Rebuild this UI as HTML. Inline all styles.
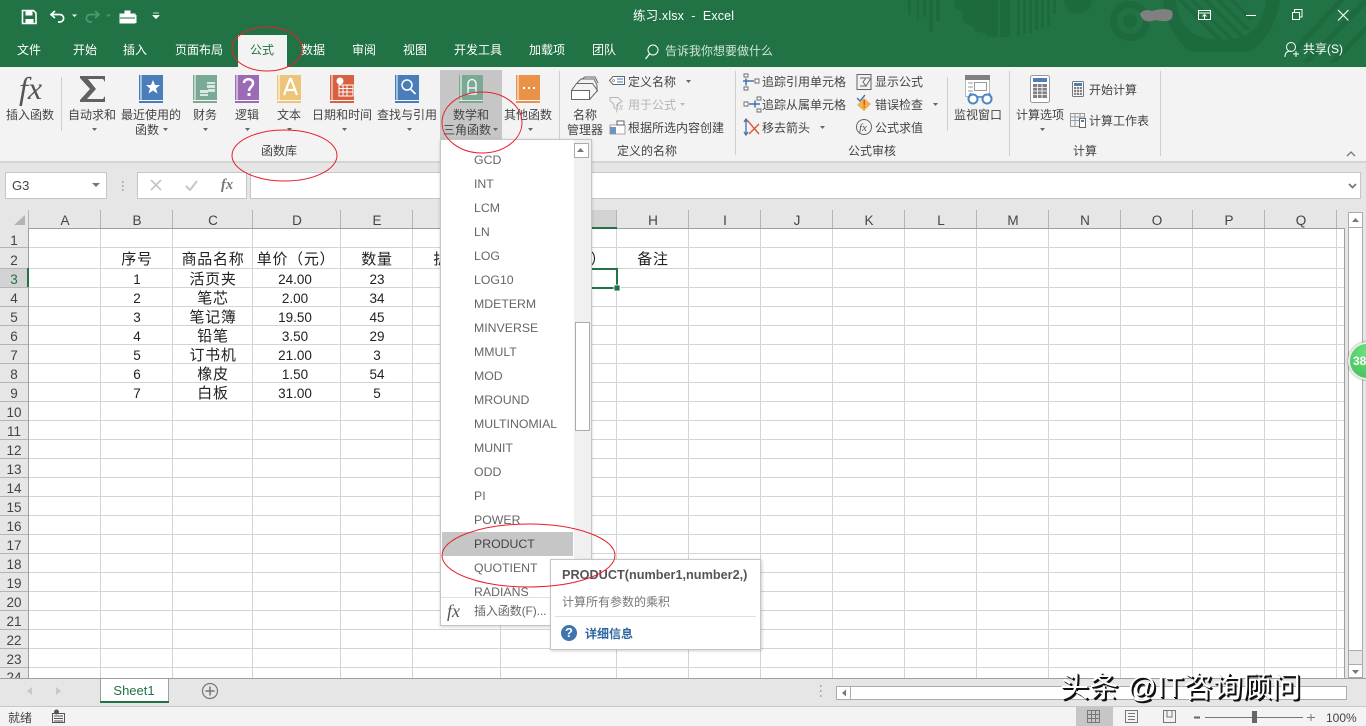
<!DOCTYPE html>
<html lang="zh"><head><meta charset="utf-8"><title>练习.xlsx - Excel</title>
<style>
html,body{margin:0;padding:0;width:1366px;height:726px;overflow:hidden;background:#fff}
body{position:relative;font-family:"Liberation Sans","Noto Sans CJK SC",sans-serif;font-size:12px;color:#444}
.a{position:absolute}
.t,.c,.r,.n,.h,.m,.rt{position:absolute;white-space:nowrap;line-height:16px;height:16px;margin-top:1px}
.c{transform:translateX(-50%)}
.w{color:#fff}
.rt{color:#444}
.n{transform:translateX(-50%);font-size:15px;letter-spacing:.7px;color:#222;line-height:20px;height:20px}
.d{transform:translateX(-50%);font-size:13.5px;color:#222;position:absolute;white-space:nowrap;line-height:20px;height:20px;margin-top:1px}
.h{transform:translateX(-50%);font-size:13.5px;color:#444;top:212px}
.r{left:0;width:28px;text-align:center;font-size:13.5px;color:#444}
.m{left:474px;font-size:12.3px;color:#666}
svg{position:absolute;left:0;top:0}
</style></head><body>

<div class="a" style="left:0;top:0;width:1366px;height:67px;background:#217346"></div>
<div class="a" style="left:0;top:67px;width:1366px;height:94px;background:#f3f3f3"></div>
<div class="a" style="left:0;top:161px;width:1366px;height:2px;background:#d4d4d4"></div>
<div class="a" style="left:0;top:163px;width:1366px;height:47px;background:#e6e6e6"></div>
<div class="a" style="left:238px;top:35px;width:49px;height:32px;background:#f3f3f3"></div>
<div class="a" style="left:440px;top:70px;width:62px;height:69px;background:#c6c6c6"></div>

<svg width="1366" height="67" viewBox="0 0 1366 67" fill="#1e6a3f">
<path d="M908 0h3v15h-3zM917 0h2v20h-2zM923 0h3v17h-3zM929 0h4v32h-4zM936 0h4v21h-4zM955 0h8v12l-8-4zM963 0h12v28l-12-6zM975 0h12v34l-12-3zM987 0h11v37h-11zM1000 0h10v37l-10 0zM1017 0h3v36h-3zM1023 0h3v34h-3zM1029 0h3v33h-3zM1035 0h3v30h-3zM1041 0h3v28h-3zM1047 0h3v26h-3zM1053 0h3v14h-3z"/>
<circle cx="1078" cy="0" r="14"/>
<path fill-rule="evenodd" d="M1130 1a20 20 0 1 0 .01 0zM1130 8a13 13 0 1 1-.01 0z"/><circle cx="1130" cy="21" r="7"/>
<path d="M1163 0h13c3 28 18 40 45 40s42-12 45-40h14c-2 18-12 40-30 52h-58c-17-10-27-32-29-52z"/>
<path d="M1178 0h5l44 44h-6zM1190 0h5l42 42h-5zM1203 0h5l38 38h-5zM1216 0h5l30 30h-5zM1229 0h5l20 20h-5z"/>
<path d="M1290 52l48-52h7l-48 52zM1303 62l60-62h3v5l-56 57zM1330 62l36-37v7l-29 30zM1270 0h8l-4 6z"/>
</svg>

<svg width="1366" height="726" viewBox="0 0 1366 726" fill="none">
<!-- QAT -->
<path d="M22.500 10.500h11l2.500 2.500v10.500h-13.500z" stroke="#fff" stroke-width="1.600"/><path d="M25.500 11h7v4.500h-7zM25.500 19h8v4.500h-8z" fill="#fff"/>
<path d="M55 11l-4 3.500 4 3.500M51.500 14.500h8c5.500 0 5.500 7.500 0 7.500h-1.500" stroke="#fff" stroke-width="1.700"/>
<path d="M72 14.500h5l-2.500 2.500z" fill="#fff"/>
<path d="M95 11l4 3.500-4 3.500M98.500 14.500h-8c-5.500 0-5.500 7.500 0 7.500h1.500" stroke="#4c9a6f" stroke-width="1.700"/>
<path d="M106 14.500h5l-2.500 2.500z" fill="#4c9a6f"/>
<path d="M120 14h15v9h-15zM125 14v-3h5v3" fill="#fff" stroke="#fff"/><path d="M120 18h15" stroke="#217346"/><rect x="135" y="15" width="1.500" height="8" fill="#fff"/>
<path d="M153 13h6M153 15.500h6l-3 3z" stroke="#fff" fill="#fff" stroke-width=".8"/>
<!-- window -->
<path d="M1198.500 10.500h12v9h-12zM1198.500 13h12M1204.500 19v-4M1202.500 16.500l2-2 2 2" stroke="#fff"/>
<rect x="1246" y="15" width="10" height="1" fill="#fff"/>
<path d="M1292.500 12.500h7v7h-7zM1294.500 12v-2.500h7.500v7.500h-2.500" stroke="#fff"/>
<path d="M1338 10l10.500 10.500M1348.500 10l-10.500 10.500" stroke="#fff" stroke-width="1.100"/>
<path d="M1140 14c3-5 8-4 12-3 6-2 15-3 20 0 1 4 1 7-2 9-5 2-10 1-15 0-5 2-12 3-15-6z" fill="#808080"/>
<!-- search / share -->
<circle cx="653" cy="50" r="5" stroke="#fff"/><path d="M649.500 54l-4 5" stroke="#fff" stroke-width="1.300"/>
<circle cx="1291" cy="47" r="4.500" stroke="#fff"/><path d="M1285 57c0-4 2-6 6-6M1293 54h6M1296 51v6" stroke="#fff"/>

<!-- ribbon separators -->
<path d="M61.500 77v54M559.500 71v84M735.500 71v84M947.500 77v54M1009.500 71v85M1160.500 71v85" stroke="#cfcfcf"/>

<!-- fx Σ -->
<path d="M80 76h25v6l-2-3h-15l8 10-9 10h16l2-3v6H80v-2l10-11-10-11z" fill="#616161"/>
<!-- books -->
<g transform="translate(139,75)"><path d="M0 0h24v25H0z" fill="#4a7eba"/><path d="M2 0v26M0 26h24" stroke="#fff"/><path d="M0 27h24" stroke="#4a7eba" stroke-width="2"/><path d="M14 5l2 5h5l-4 3.500 1.500 5-4.500-3-4.500 3 1.500-5L7 10h5z" fill="#fff"/></g>
<g transform="translate(193,75)"><path d="M0 0h24v25H0z" fill="#7aaa96"/><path d="M2 0v26M0 26h24" stroke="#fff"/><path d="M0 27h24" stroke="#7aaa96" stroke-width="2"/><path d="M7 15h8v3H7zM7 19h8v2H7zM14 10h8v3h-8zM15 14h7v3h-7zM14 7h8v2h-8z" fill="#d9e7e1"/></g>
<g transform="translate(235,75)"><path d="M0 0h24v25H0z" fill="#9c6bb5"/><path d="M2 0v26M0 26h24" stroke="#fff"/><path d="M0 27h24" stroke="#9c6bb5" stroke-width="2"/><path d="M9 8c0-5 9-5 9 0 0 4-4 4-4 8" stroke="#fff" stroke-width="2.500"/><rect x="12.500" y="18" width="3" height="3" fill="#fff"/></g>
<g transform="translate(277,75)"><path d="M0 0h24v25H0z" fill="#eec47a"/><path d="M2 0v26M0 26h24" stroke="#fff"/><path d="M0 27h24" stroke="#eec47a" stroke-width="2"/><path d="M7 20l6-16h1l6 16M9 15h9" stroke="#fff" stroke-width="2.200"/></g>
<g transform="translate(330,75)"><path d="M0 0h24v25H0z" fill="#d6603f"/><path d="M2 0v26M0 26h24" stroke="#fff"/><path d="M0 27h24" stroke="#d6603f" stroke-width="2"/><circle cx="10" cy="6" r="3.500" fill="#fff"/><path d="M9 10h14v11H9zM9 13.500h14M9 17h14M13 10v11M17 10v11" stroke="#fff"/></g>
<g transform="translate(395,75)"><path d="M0 0h24v25H0z" fill="#4a7eba"/><path d="M2 0v26M0 26h24" stroke="#fff"/><path d="M0 27h24" stroke="#4a7eba" stroke-width="2"/><circle cx="12" cy="10" r="5" stroke="#fff" stroke-width="1.500"/><path d="M15.500 14l5 5" stroke="#fff" stroke-width="1.800"/></g>
<g transform="translate(459,75)"><path d="M0 0h24v25H0z" fill="#7aaa96"/><path d="M2 0v26M0 26h24" stroke="#fff"/><path d="M0 27h24" stroke="#7aaa96" stroke-width="2"/><path d="M9 19V9c0-6 8-6 8 0v10zM9 13h8" stroke="#fff" stroke-width="1.300"/></g>
<g transform="translate(516,75)"><path d="M0 0h24v25H0z" fill="#e8924a"/><path d="M2 0v26M0 26h24" stroke="#fff"/><path d="M0 27h24" stroke="#e8924a" stroke-width="2"/><path d="M7 12h2v2H7zM12 12h2v2h-2zM17 12h2v2h-2z" fill="#fff"/></g>

<!-- carets -->
<path d="M92 128h5l-2.500 3zM163 128h5l-2.500 3zM203 128h5l-2.500 3zM245 128h5l-2.500 3zM287 128h5l-2.500 3zM342 128h5l-2.500 3zM407 128h5l-2.500 3zM493 128h5l-2.500 3zM528 128h5l-2.500 3zM686 80h5l-2.500 3zM820 126h5l-2.500 3zM933 103h5l-2.500 3zM1040 128h5l-2.500 3z" fill="#666"/>
<path d="M680 103h5l-2.500 3z" fill="#bbb"/>

<!-- names icons -->
<path d="M571.500 90.500h18v9h-18zM571.500 90.500l5-7h16l5 7-8 9M577 83l4-4h13l3 6v7M582 79l3-2h10l3 6" stroke="#666" fill="none"/><rect x="572" y="91" width="17" height="8" fill="#fff"/><path d="M571.500 90.500h18v9h-18z" stroke="#666"/>
<path d="M613 76.500h11.500v8H613l-3.500-4z" stroke="#666" fill="#fff"/><path d="M617 79h6M617 82h6" stroke="#3f74ae"/><circle cx="613.500" cy="80.500" r="1" stroke="#666" stroke-width=".6"/>
<path d="M610 97.500h8l4 4-5 3v5l-3-2v-3l-4-4z" stroke="#b5b5b5"/><text x="616" y="110" font-family="Liberation Serif" font-style="italic" font-size="10" fill="#b5b5b5">fx</text>
<path d="M610 125h15v9h-15z" fill="#fff" stroke="#888" stroke-width=".8"/><path d="M610 127h6v7h-6z" fill="#6f93bd"/><path d="M617 121h7v4h-7z" stroke="#666" fill="#fff"/>

<!-- audit icons -->
<path d="M744 74h4v3h-4zM744 87h4v3h-4zM755 79h4v4h-4z" stroke="#666" stroke-width=".9" fill="#fff"/><path d="M748 81h6M746 78.500v7M743 81h6" stroke="#3f74ae" stroke-width="1.500"/>
<path d="M744 102h4v4h-4zM757 97h4v3h-4zM757 109h4v3h-4z" stroke="#666" stroke-width=".9" fill="#fff"/><path d="M749 104h11M755 100.500v7" stroke="#3f74ae" stroke-width="1.500"/>
<path d="M746 120v14M744 132l2 3 2-3M744 122l2-3 2 3" stroke="#3f74ae" stroke-width="1.300"/><path d="M747 120l12 14M759 124l-10 10" stroke="#d9573a" stroke-width="1.400"/>
<path d="M857 74.500h14v15h-14zM860 78h6l-3 4 3 4h-6M867 78l3 0M866 86l5-8" stroke="#666"/>
<path d="M857 98l3 3 5-6" stroke="#3f74ae" stroke-width="1.400"/><path d="M864 98l7 6-7 7-7-6z" fill="#f0b04c"/><rect x="863.500" y="100" width="1.500" height="5" fill="#d1502f"/><rect x="863.500" y="106" width="1.500" height="1.500" fill="#d1502f"/>
<circle cx="864" cy="127" r="7.500" stroke="#666"/>
<text x="859" y="131" font-family="Liberation Serif" font-style="italic" font-size="11" fill="#555">fx</text>

<!-- watch -->
<path d="M965.500 75.500h24v21h-24z" fill="#fff" stroke="#bbb"/><rect x="965" y="75" width="25" height="5" fill="#808080"/>
<path d="M968 83h5M968 87h5M968 91h5" stroke="#999"/><path d="M974.500 82.500h12v8h-12z" stroke="#999"/>
<circle cx="973" cy="99" r="4.500" stroke="#4f86c6" stroke-width="2" fill="#fff"/><circle cx="987" cy="99" r="4.500" stroke="#4f86c6" stroke-width="2" fill="#fff"/><path d="M977 97h6M968 98l3-5M992 98l-3-5" stroke="#4f86c6" stroke-width="1.500"/>

<!-- calc -->
<rect x="1030.500" y="75.500" width="19" height="27" rx="2" fill="#fff" stroke="#999"/><rect x="1033" y="78" width="14" height="4" fill="#4a7eba"/>
<path d="M1033 84h14v14h-14z" fill="#808080"/><path d="M1033 87.500h14M1033 91h14M1033 94.500h14M1037.500 84v14M1042 84v14" stroke="#fff" stroke-width=".8"/>
<rect x="1072.500" y="81.500" width="11" height="15" rx="1" fill="#fff" stroke="#777"/><rect x="1074" y="83" width="8" height="3" fill="#4a7eba"/><path d="M1074 87h8v8h-8z" fill="#808080"/><path d="M1074 89.500h8M1074 92.500h8M1076.500 87v8M1079.500 87v8" stroke="#fff" stroke-width=".7"/>
<path d="M1070.500 113.500h14v13h-14zM1070.500 117h14M1070.500 120.500h14M1075 113.500v13M1080 113.500v13" stroke="#999"/><rect x="1079.500" y="118.500" width="6" height="9" fill="#fff" stroke="#666"/><rect x="1081" y="120" width="3" height="2" fill="#4a7eba"/>
<path d="M1347 156l4-4 4 4" stroke="#777" stroke-width="1.300"/>

<!-- formula bar -->
<rect x="5.500" y="172.500" width="101" height="26" fill="#fff" stroke="#c6c6c6"/>
<path d="M92 183h8l-4 4z" fill="#777"/>
<path d="M122 181h1.500v2H122zM122 185h1.500v2H122zM122 189h1.500v2H122z" fill="#aaa"/>
<rect x="137.500" y="172.500" width="109" height="26" fill="#fff" stroke="#c6c6c6"/>
<path d="M151 180l10 10M161 180l-10 10" stroke="#c6c6c6" stroke-width="1.800"/>
<path d="M186 186l4 4 7-9" stroke="#c6c6c6" stroke-width="2"/>
<rect x="250.500" y="172.500" width="1110" height="26" fill="#fff" stroke="#c6c6c6"/>
<path d="M1349 184l3.500 3.500 3.500-3.500" stroke="#777" stroke-width="1.800"/>

<!-- header -->
<rect x="0" y="210" width="1345" height="18" fill="#e6e6e6"/>
<rect x="0" y="228" width="28" height="450" fill="#e6e6e6"/>
<rect x="0" y="268" width="28" height="19" fill="#d2d2d2"/>
<rect x="500" y="210" width="116" height="18" fill="#d2d2d2"/>
<path d="M25 215v10H14z" fill="#b4b4b4"/>
<!-- grid -->
<path stroke="#d4d4d4" d="M29 247.500H1344M29 268.500H1344M29 287.500H1344M29 306.500H1344M29 325.500H1344M29 344.500H1344M29 363.500H1344M29 382.500H1344M29 401.500H1344M29 420.500H1344M29 439.500H1344M29 458.500H1344M29 477.500H1344M29 496.500H1344M29 515.500H1344M29 534.500H1344M29 553.500H1344M29 572.500H1344M29 591.500H1344M29 610.500H1344M29 629.500H1344M29 648.500H1344M29 667.500H1344
M100.500 229V678M172.500 229V678M252.500 229V678M340.500 229V678M412.500 229V678M500.500 229V678M616.500 229V678M688.500 229V678M760.500 229V678M832.500 229V678M904.500 229V678M976.500 229V678M1048.500 229V678M1120.500 229V678M1192.500 229V678M1264.500 229V678M1336.500 229V678"/>
<path stroke="#b4b4b4" d="M0 247.500H28M0 268.500H28M0 287.500H28M0 306.500H28M0 325.500H28M0 344.500H28M0 363.500H28M0 382.500H28M0 401.500H28M0 420.500H28M0 439.500H28M0 458.500H28M0 477.500H28M0 496.500H28M0 515.500H28M0 534.500H28M0 553.500H28M0 572.500H28M0 591.500H28M0 610.500H28M0 629.500H28M0 648.500H28M0 667.500H28
M28.500 210V228M100.500 210V228M172.500 210V228M252.500 210V228M340.500 210V228M412.500 210V228M500.500 210V228M616.500 210V228M688.500 210V228M760.500 210V228M832.500 210V228M904.500 210V228M976.500 210V228M1048.500 210V228M1120.500 210V228M1192.500 210V228M1264.500 210V228M1336.500 210V228"/>
<path stroke="#9f9f9f" d="M28 228.500H1345M28.500 228V678M1344.500 228V678"/>
<rect x="27" y="268" width="2" height="19" fill="#217346"/>
<rect x="500" y="227" width="117" height="2" fill="#217346"/>
<rect x="500" y="268" width="118" height="2" fill="#217346"/><rect x="500" y="287" width="118" height="2" fill="#217346"/><rect x="616" y="268" width="2" height="20" fill="#217346"/><rect x="614" y="285" width="6" height="6" fill="#217346" stroke="#fff" stroke-width=".8"/>

<!-- v scrollbar -->
<rect x="1345" y="210" width="21" height="468" fill="#e6e6e6"/>
<rect x="1348.500" y="212.500" width="14" height="465" fill="#fff" stroke="#ababab"/>
<path d="M1352 222h7l-3.500-4z" fill="#777"/>
<path d="M1349 227.500h13M1349 650.500h13M1349 664.500h13" stroke="#ababab"/>
<path d="M1352 670h7l-3.500 4z" fill="#777"/>
<rect x="1349" y="651" width="13" height="13" fill="#e6e6e6"/>

<!-- sheet bar -->
<rect x="0" y="678" width="1366" height="28" fill="#e6e6e6"/>
<rect x="0" y="678" width="1366" height="1" fill="#9f9f9f"/>
<rect x="0" y="706" width="1366" height="20" fill="#f3f3f3"/><rect x="0" y="706" width="1366" height="1" fill="#c8c8c8"/>
<path d="M100.500 702V678.500H168.500V702" fill="#fff" stroke="#9f9f9f"/><rect x="100" y="701" width="69" height="2" fill="#217346"/>
<path d="M32 687l-5 4 5 4zM56 687l5 4-5 4z" fill="#c8c8c8"/>
<circle cx="210" cy="691" r="7.500" stroke="#777" stroke-width="1.200"/><path d="M205.500 691h9M210 686.500v9" stroke="#777" stroke-width="1.500"/>
<path d="M820 685h1.500v2H820zM820 690h1.500v2H820zM820 695h1.500v2H820z" fill="#aaa"/>
<rect x="836.500" y="686.500" width="510" height="13" fill="#fff" stroke="#ababab"/><path d="M850.500 687v12" stroke="#ababab"/><path d="M846 689.500v7l-4-3.500z" fill="#777"/>
<rect x="1076" y="707" width="37" height="19" fill="#c6c6c6"/>
<path d="M1087.500 710.500h12v12h-12zM1087.500 714.500h12M1087.500 718.500h12M1091.500 710.500v12M1095.500 710.500v12" stroke="#777"/>
<path d="M1125.500 710.500h12v12h-12zM1128 713.500h7M1128 716.500h7M1128 719.500h7" stroke="#777"/>
<path d="M1163.500 710.500h12v12h-12zM1167 710v7h5v-7" stroke="#777"/>
<path d="M1194 717.500h6M1205 717.500h98M1307 717.500h8M1311 714v7" stroke="#777"/><path d="M1194 717.500h6" stroke="#666" stroke-width="2"/>
<rect x="1252" y="711" width="5" height="12" fill="#666"/>
<circle cx="56.500" cy="712" r="2.500" fill="#555"/><path d="M52.500 713.500h12v9h-12zM54 716h9M54 718.500h9M54 721h9" stroke="#555"/>
</svg>

<!-- labels -->
<div class="a" style="left:19px;top:69px;font:italic 32px/38px 'Liberation Serif',serif;color:#555">fx</div>
<div class="a" style="left:221px;top:177px;font:italic bold 14.5px/17px 'Liberation Serif',serif;color:#777">fx</div>
<div class="t w" style="left:633px;top:7px;font-size:12.5px;letter-spacing:.15px">练习.xlsx&nbsp; -&nbsp; Excel</div>
<div class="c w" style="left:29px;top:41px">文件</div>
<div class="c w" style="left:85px;top:41px">开始</div>
<div class="c w" style="left:135px;top:41px">插入</div>
<div class="c w" style="left:199px;top:41px">页面布局</div>
<div class="c" style="left:262px;top:41px;color:#217346">公式</div>
<div class="c w" style="left:313px;top:41px">数据</div>
<div class="c w" style="left:364px;top:41px">审阅</div>
<div class="c w" style="left:415px;top:41px">视图</div>
<div class="c w" style="left:478px;top:41px">开发工具</div>
<div class="c w" style="left:547px;top:41px">加载项</div>
<div class="c w" style="left:604px;top:41px">团队</div>
<div class="t" style="left:665px;top:42px;color:#cfe3d7">告诉我你想要做什么</div>
<div class="t w" style="left:1303px;top:40px">共享(S)</div>

<div class="c" style="left:30px;top:106px">插入函数</div>
<div class="c" style="left:92px;top:106px">自动求和</div>
<div class="c" style="left:151px;top:106px">最近使用的</div>
<div class="c" style="left:147px;top:121px">函数</div>
<div class="c" style="left:205px;top:106px">财务</div>
<div class="c" style="left:247px;top:106px">逻辑</div>
<div class="c" style="left:289px;top:106px">文本</div>
<div class="c" style="left:342px;top:106px">日期和时间</div>
<div class="c" style="left:407px;top:106px">查找与引用</div>
<div class="c" style="left:471px;top:106px">数学和</div>
<div class="c" style="left:467px;top:121px">三角函数</div>
<div class="c" style="left:528px;top:106px">其他函数</div>
<div class="c" style="left:585px;top:106px">名称</div>
<div class="c" style="left:585px;top:121px">管理器</div>
<div class="rt" style="left:628px;top:73px">定义名称</div>
<div class="rt" style="left:628px;top:96px;color:#b5b5b5">用于公式</div>
<div class="rt" style="left:628px;top:119px">根据所选内容创建</div>
<div class="rt" style="left:762px;top:73px">追踪引用单元格</div>
<div class="rt" style="left:762px;top:96px">追踪从属单元格</div>
<div class="rt" style="left:762px;top:119px">移去箭头</div>
<div class="rt" style="left:875px;top:73px">显示公式</div>
<div class="rt" style="left:875px;top:96px">错误检查</div>
<div class="rt" style="left:875px;top:119px">公式求值</div>
<div class="c" style="left:978px;top:106px">监视窗口</div>
<div class="c" style="left:1040px;top:106px">计算选项</div>
<div class="rt" style="left:1089px;top:81px">开始计算</div>
<div class="rt" style="left:1089px;top:112px">计算工作表</div>
<div class="c" style="left:279px;top:142px">函数库</div>
<div class="c" style="left:647px;top:142px">定义的名称</div>
<div class="c" style="left:872px;top:142px">公式审核</div>
<div class="c" style="left:1085px;top:142px">计算</div>
<div class="t" style="left:12px;top:177px;font-size:13px">G3</div>

<!-- col heads -->
<div class="h" style="left:65px">A</div><div class="h" style="left:137px">B</div><div class="h" style="left:213px">C</div><div class="h" style="left:297px">D</div><div class="h" style="left:377px">E</div><div class="h" style="left:653px">H</div><div class="h" style="left:725px">I</div><div class="h" style="left:797px">J</div><div class="h" style="left:869px">K</div><div class="h" style="left:941px">L</div><div class="h" style="left:1013px">M</div><div class="h" style="left:1085px">N</div><div class="h" style="left:1157px">O</div><div class="h" style="left:1229px">P</div><div class="h" style="left:1301px">Q</div>
<!-- row heads -->
<div class="r" style="top:232px">1</div><div class="r" style="top:252px">2</div><div class="r" style="top:271px;color:#217346">3</div><div class="r" style="top:290px">4</div><div class="r" style="top:309px">5</div><div class="r" style="top:328px">6</div><div class="r" style="top:347px">7</div><div class="r" style="top:366px">8</div><div class="r" style="top:385px">9</div><div class="r" style="top:404px">10</div><div class="r" style="top:423px">11</div><div class="r" style="top:442px">12</div><div class="r" style="top:461px">13</div><div class="r" style="top:480px">14</div><div class="r" style="top:499px">15</div><div class="r" style="top:518px">16</div><div class="r" style="top:537px">17</div><div class="r" style="top:556px">18</div><div class="r" style="top:575px">19</div><div class="r" style="top:594px">20</div><div class="r" style="top:613px">21</div><div class="r" style="top:632px">22</div><div class="r" style="top:651px">23</div><div class="r" style="top:669px;height:8px;overflow:hidden">24</div>

<!-- cells -->
<div class="n" style="left:137px;top:249px">序号</div><div class="n" style="left:213px;top:249px">商品名称</div><div class="n" style="left:296px;top:249px">单价（元）</div><div class="n" style="left:377px;top:249px">数量</div><div class="n" style="left:449px;top:249px">折扣</div><div class="n" style="left:567px;top:249px">金额（元）</div><div class="n" style="left:653px;top:249px">备注</div>
<div class="d" style="left:137px;top:269px">1</div><div class="n" style="left:213px;top:269px">活页夹</div><div class="d" style="left:295px;top:269px">24.00</div><div class="d" style="left:377px;top:269px">23</div>
<div class="d" style="left:137px;top:288px">2</div><div class="n" style="left:213px;top:288px">笔芯</div><div class="d" style="left:295px;top:288px">2.00</div><div class="d" style="left:377px;top:288px">34</div>
<div class="d" style="left:137px;top:307px">3</div><div class="n" style="left:213px;top:307px">笔记簿</div><div class="d" style="left:295px;top:307px">19.50</div><div class="d" style="left:377px;top:307px">45</div>
<div class="d" style="left:137px;top:326px">4</div><div class="n" style="left:213px;top:326px">铅笔</div><div class="d" style="left:295px;top:326px">3.50</div><div class="d" style="left:377px;top:326px">29</div>
<div class="d" style="left:137px;top:345px">5</div><div class="n" style="left:213px;top:345px">订书机</div><div class="d" style="left:295px;top:345px">21.00</div><div class="d" style="left:377px;top:345px">3</div>
<div class="d" style="left:137px;top:364px">6</div><div class="n" style="left:213px;top:364px">橡皮</div><div class="d" style="left:295px;top:364px">1.50</div><div class="d" style="left:377px;top:364px">54</div>
<div class="d" style="left:137px;top:383px">7</div><div class="n" style="left:213px;top:383px">白板</div><div class="d" style="left:295px;top:383px">31.00</div><div class="d" style="left:377px;top:383px">5</div>

<div class="c" style="left:134px;top:682px;font-size:13px;color:#217346">Sheet1</div>
<div class="t" style="left:8px;top:709px">就绪</div>
<div class="t" style="left:1326px;top:709px">100%</div>

<!-- dropdown -->
<div class="a" style="left:440px;top:139px;width:150px;height:485px;background:#fff;border:1px solid #c6c6c6;box-shadow:0 1px 3px rgba(0,0,0,.18)"></div>
<div class="a" style="left:574px;top:140px;width:17px;height:457px;background:#f0f0f0"></div>
<div class="a" style="left:574px;top:143px;width:13px;height:13px;background:#fff;border:1px solid #ababab"></div>
<div class="a" style="left:575px;top:322px;width:13px;height:107px;background:#fff;border:1px solid #ababab"></div>
<div class="a" style="left:442px;top:532px;width:131px;height:24px;background:#c6c6c6"></div>
<div class="a" style="left:441px;top:597px;width:149px;height:1px;background:#e0e0e0"></div>
<div class="a" style="left:441px;top:598px;width:149px;height:26px;background:#fff"></div>
<svg width="1366" height="726" viewBox="0 0 1366 726"><path d="M577 152h7l-3.500-4z" fill="#777"/></svg>
<div class="m" style="top:151px">GCD</div><div class="m" style="top:175px">INT</div><div class="m" style="top:199px">LCM</div><div class="m" style="top:223px">LN</div><div class="m" style="top:247px">LOG</div><div class="m" style="top:271px">LOG10</div><div class="m" style="top:295px">MDETERM</div><div class="m" style="top:319px">MINVERSE</div><div class="m" style="top:343px">MMULT</div><div class="m" style="top:367px">MOD</div><div class="m" style="top:391px">MROUND</div><div class="m" style="top:415px">MULTINOMIAL</div><div class="m" style="top:439px">MUNIT</div><div class="m" style="top:463px">ODD</div><div class="m" style="top:487px">PI</div><div class="m" style="top:511px">POWER</div><div class="m" style="top:535px;color:#444">PRODUCT</div><div class="m" style="top:559px">QUOTIENT</div><div class="m" style="top:583px;height:13px;overflow:hidden">RADIANS</div>
<div class="a" style="left:447px;top:601px;font:italic 18px/20px 'Liberation Serif',serif;color:#555">fx</div>
<div class="t" style="left:474px;top:602px;color:#666;letter-spacing:-.1px">插入函数(F)...</div>

<!-- tooltip -->
<div class="a" style="left:550px;top:559px;width:209px;height:89px;background:#fff;border:1px solid #c6c6c6;box-shadow:1px 1px 3px rgba(0,0,0,.2)"></div>
<div class="t" style="left:562px;top:566px;font-weight:bold;font-size:12.7px;color:#555">PRODUCT(number1,number2,)</div>
<div class="t" style="left:562px;top:593px;color:#777">计算所有参数的乘积</div>
<div class="a" style="left:555px;top:616px;width:201px;height:1px;background:#e0e0e0"></div>
<div class="a" style="left:561px;top:625px;width:16px;height:16px;border-radius:50%;background:#3f74ae;color:#fff;font:bold 13px/16px 'Liberation Sans',sans-serif;text-align:center">?</div>
<div class="t" style="left:585px;top:625px;font-weight:bold;color:#2f659f">详细信息</div>

<!-- red ellipses -->
<svg width="1366" height="726" viewBox="0 0 1366 726" fill="none" stroke="#e8202c" stroke-width="1">
<ellipse cx="267" cy="49" rx="35" ry="22"/>
<ellipse cx="284.500" cy="155.500" rx="52.500" ry="25.500"/>
<ellipse cx="482" cy="122.500" rx="40" ry="30.500"/>
<ellipse cx="528.500" cy="555.500" rx="86.500" ry="31.500"/>
</svg>

<!-- float badge -->
<div class="a" style="left:1348px;top:342px;width:34px;height:34px;border-radius:50%;background:radial-gradient(circle at 50% 25%,#6fe07f,#3fbf58);border:2px solid #e6eee8;box-shadow:0 0 2px rgba(0,0,0,.5);color:#fff;font:bold 12px/34px 'Liberation Sans',sans-serif;text-indent:3px">38</div>

<!-- watermark -->
<div class="t" style="left:1060px;top:669px;height:36px;line-height:36px;font-size:29px;color:#fff;text-shadow:2px 2px 0 #111,1px 1px 0 #111;letter-spacing:.4px">头条 @IT咨询顾问</div>
</body></html>
